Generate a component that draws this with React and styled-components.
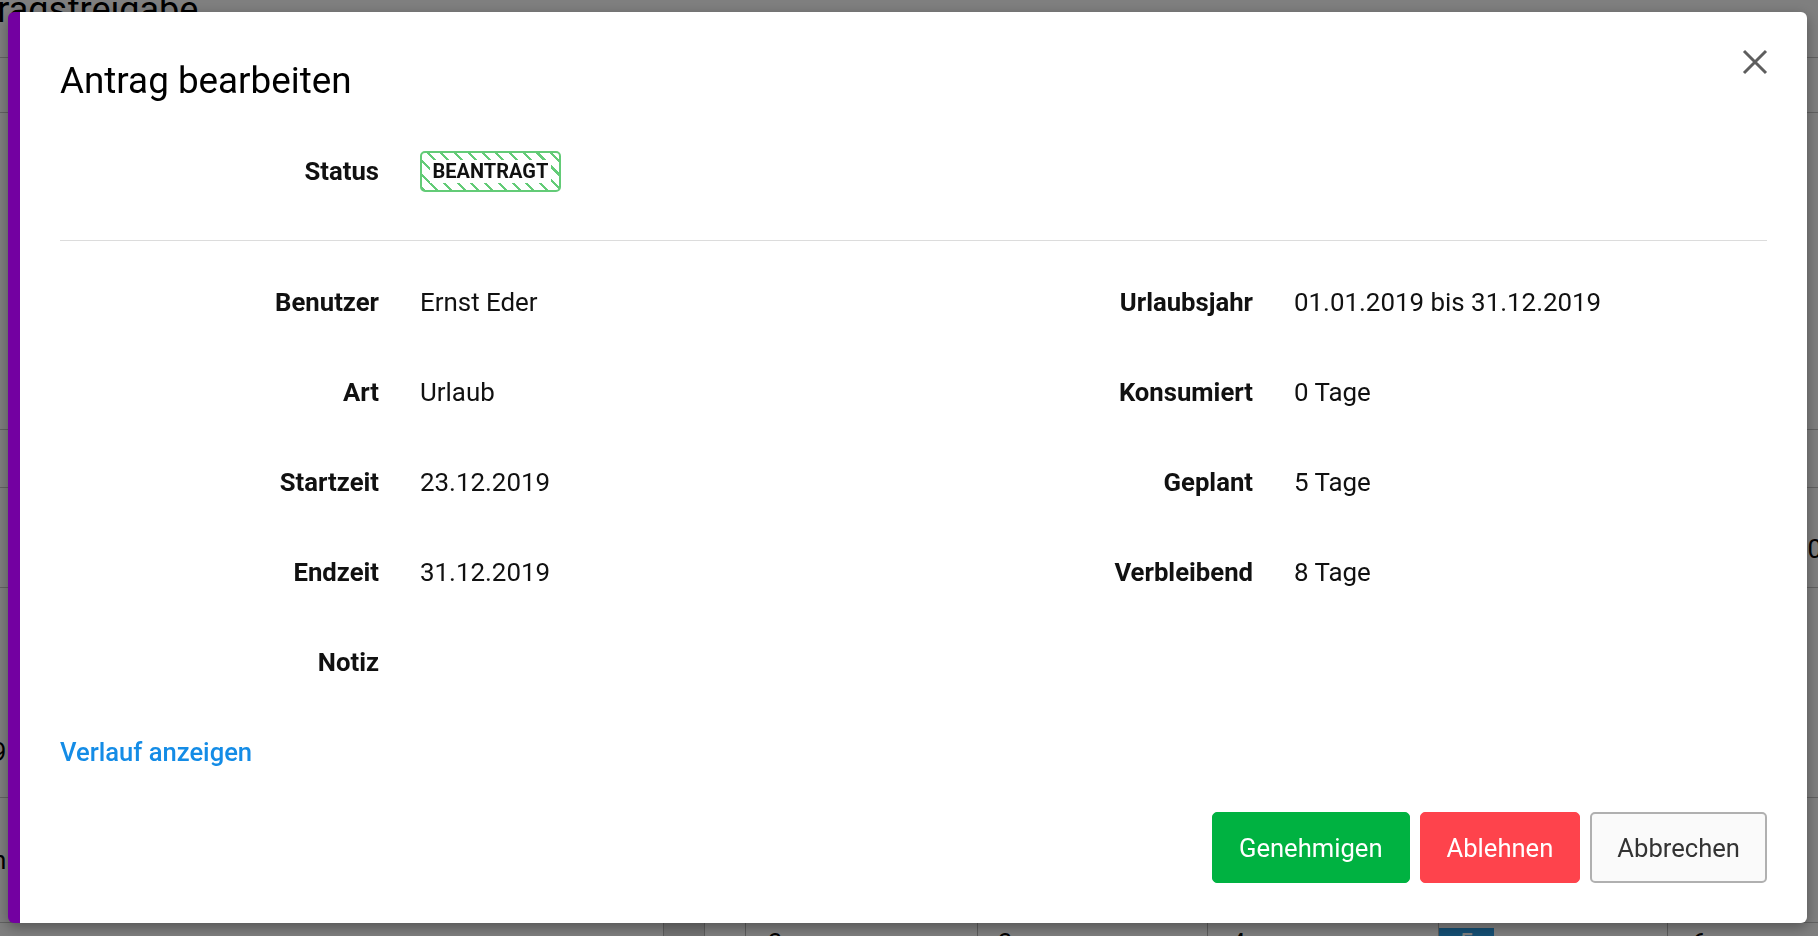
import React from "react";
import styled, { createGlobalStyle } from "styled-components";

const Global = createGlobalStyle`
  html, body { margin: 0; padding: 0; }
  body {
    font-family: Roboto, "Noto Sans", "Liberation Sans", sans-serif;
    background: #fff;
    color: #111;
    overflow: hidden;
  }
  * { box-sizing: border-box; }
`;

/* ---------- background page (under the overlay) ---------- */
const Page = styled.div`
  width: 1818px;
  height: 936px;
  overflow: hidden;
  background: #fff;
  display: flex;
  flex-direction: column;
`;

const PageHeader = styled.header`
  height: 58px;
  flex: none;
  border-bottom: 1px solid #c4c4c4;
`;

const PageTitle = styled.h1`
  margin: -8px 0 0 -58px;
  font-size: 36px;
  line-height: 36px;
  font-weight: 400;
  color: #000;
  white-space: nowrap;
`;

const BgRow = styled.div`
  height: ${(p) => p.$h}px;
  flex: none;
  border-bottom: 1px solid #c4c4c4;
  display: flex;
  justify-content: space-between;
  align-items: ${(p) => p.$align || "center"};
  padding-bottom: ${(p) => p.$pb || 0}px;
  font-size: 26px;
  line-height: 30px;
  color: #000;
`;

const EdgeText = styled.span`
  margin: ${(p) => p.$m};
  white-space: nowrap;
`;

const CalRow = styled.div`
  flex: 1;
  display: flex;
`;

const CalCell = styled.div`
  width: ${(p) => p.$w}px;
  flex: none;
  border-left: ${(p) => (p.$first ? "none" : "1px solid #b8b8b8")};
  background: ${(p) => (p.$shade ? "#e6e6e6" : "#fff")};
  padding: 5px 0 0 ${(p) => p.$pl || 0}px;
  font-size: 26px;
  line-height: 30px;
  color: #000;
`;

const DayNum = styled.span`
  display: inline-block;
  padding: 0 ${(p) => (p.$today ? 20 : 0)}px;
  background: ${(p) => (p.$today ? "#2a9fe8" : "transparent")};
  color: ${(p) => (p.$today ? "#fff" : "#000")};
`;

/* ---------- modal ---------- */
const Overlay = styled.div`
  position: fixed;
  inset: 0;
  background: rgba(0, 0, 0, 0.5);
`;

const Dialog = styled.div`
  position: fixed;
  left: 8px;
  top: 12px;
  width: 1799px;
  height: 911px;
  background: #fff;
  border-left: 12px solid #7300a1;
  border-radius: 6px;
  box-shadow: 0 4px 14px rgba(0, 0, 0, 0.35);
  padding: 46.5px 40px 40px;
  display: flex;
  flex-direction: column;
`;

const DialogHeader = styled.div`
  display: flex;
  justify-content: space-between;
  align-items: flex-start;
`;

const DialogTitle = styled.h2`
  margin: 0;
  font-size: 36.8px;
  line-height: 44px;
  font-weight: 400;
  color: #000;
`;

const CloseButton = styled.button`
  margin: -9.5px -1px 0 0;
  width: 26px;
  height: 26px;
  padding: 0;
  border: 0;
  background: none;
  color: #5e5e5e;
  display: flex;
  cursor: pointer;
`;

const FieldRow = styled.div`
  display: grid;
  grid-template-columns: ${(p) => p.$label}px 1fr;
  column-gap: 41px;
  align-items: center;
  height: ${(p) => p.$h}px;
  margin-top: ${(p) => p.$mt || 0}px;
`;

const Label = styled.div`
  text-align: right;
  font-weight: 700;
  font-size: 25.7px;
  line-height: 38.4px;
  color: #111;
  white-space: nowrap;
`;

const Value = styled.div`
  font-size: 25.9px;
  line-height: 38.4px;
  color: #111;
  white-space: nowrap;
`;

const StatusBadge = styled.span`
  justify-self: start;
  display: inline-flex;
  padding: 7px 7.5px;
  border: 2px solid #63cb77;
  border-radius: 5px;
  background: repeating-linear-gradient(
    45deg,
    #63cb77 0,
    #63cb77 2.2px,
    #fff 2.2px,
    #fff 9.7px
  );
`;

const BadgeText = styled.span`
  padding: 0 3px;
  background: #fff;
  font-size: 20px;
  line-height: 23px;
  font-weight: 700;
  color: #111;
`;

const Divider = styled.hr`
  margin: 48px 0 0;
  border: 0;
  border-top: 1px solid #dcdcdc;
  height: 0;
`;

const DetailGrid = styled.div`
  display: grid;
  grid-template-columns: 1fr 1fr;
  padding-top: 16.3px;
`;

const DetailColumn = styled.div`
  display: flex;
  flex-direction: column;
`;

const HistoryLink = styled.a`
  margin-top: 25.8px;
  align-self: flex-start;
  font-size: 25.6px;
  line-height: 38.4px;
  font-weight: 500;
  color: #148ce6;
  text-decoration: none;
  cursor: pointer;
`;

const Footer = styled.div`
  margin-top: auto;
  display: flex;
  justify-content: flex-end;
  gap: 10px;
`;

const variants = {
  approve: { bg: "#00b241", border: "#00b241", color: "#fff" },
  reject: { bg: "#fe434c", border: "#fe434c", color: "#fff" },
  cancel: { bg: "#fafafa", border: "#b0b0b0", color: "#333" },
};

const Button = styled.button`
  height: 71px;
  padding: 0 ${(p) => (p.$variant === "cancel" ? 25 : 26)}px;
  border: ${(p) => (p.$variant === "cancel" ? 2 : 1)}px solid
    ${(p) => variants[p.$variant].border};
  border-radius: 5px;
  background: ${(p) => variants[p.$variant].bg};
  color: ${(p) => variants[p.$variant].color};
  font-family: inherit;
  font-size: 25.6px;
  font-weight: 400;
  cursor: pointer;
`;

const leftFields = [
  ["Benutzer", "Ernst Eder"],
  ["Art", "Urlaub"],
  ["Startzeit", "23.12.2019"],
  ["Endzeit", "31.12.2019"],
  ["Notiz", ""],
];

const rightFields = [
  ["Urlaubsjahr", "01.01.2019 bis 31.12.2019"],
  ["Konsumiert", "0 Tage"],
  ["Geplant", "5 Tage"],
  ["Verbleibend", "8 Tage"],
];

const calendarCells = [
  { w: 663, first: true },
  { w: 41, shade: true },
  { w: 41 },
  { w: 232, n: "3", pl: 22 },
  { w: 230, n: "3", pl: 20 },
  { w: 231, n: "4", pl: 23 },
  { w: 229, n: "5", today: true },
  { w: 160, n: "6", pl: 24 },
];

function CloseIcon() {
  return (
    <svg width="26" height="26" viewBox="0 0 26 26" fill="none">
      <path
        d="M2 2 L24 24 M24 2 L2 24"
        stroke="currentColor"
        strokeWidth="3"
      />
    </svg>
  );
}

export default function App() {
  return (
    <>
      <Global />
      <Page>
        <PageHeader>
          <PageTitle>Antragsfreigabe</PageTitle>
        </PageHeader>
        <BgRow $h={55} />
        <BgRow $h={317} />
        <BgRow $h={58} />
        <BgRow $h={100} $align="flex-start">
          <span />
          <EdgeText $m="46px -4px 0 0">0</EdgeText>
        </BgRow>
        <BgRow $h={210} $align="flex-end" $pb={30}>
          <EdgeText $m="0 0 0 -52px">2019</EdgeText>
        </BgRow>
        <BgRow $h={125}>
          <EdgeText $m="0 0 0 -8px">n</EdgeText>
        </BgRow>
        <CalRow>
          {calendarCells.map((c, i) => (
            <CalCell key={i} $w={c.w} $first={c.first} $shade={c.shade} $pl={c.pl}>
              {c.n && <DayNum $today={c.today}>{c.n}</DayNum>}
            </CalCell>
          ))}
        </CalRow>
      </Page>

      <Overlay />
      <Dialog role="dialog" aria-label="Antrag bearbeiten">
        <DialogHeader>
          <DialogTitle>Antrag bearbeiten</DialogTitle>
          <CloseButton aria-label="Schließen">
            <CloseIcon />
          </CloseButton>
        </DialogHeader>

        <FieldRow $label={319} $h={41} $mt={48.5}>
          <Label>Status</Label>
          <StatusBadge>
            <BadgeText>BEANTRAGT</BadgeText>
          </StatusBadge>
        </FieldRow>

        <Divider />

        <DetailGrid>
          <DetailColumn>
            {leftFields.map(([l, v]) => (
              <FieldRow key={l} $label={319} $h={90}>
                <Label>{l}</Label>
                <Value>{v}</Value>
              </FieldRow>
            ))}
          </DetailColumn>
          <DetailColumn>
            {rightFields.map(([l, v]) => (
              <FieldRow key={l} $label={339.5} $h={90}>
                <Label>{l}</Label>
                <Value>{v}</Value>
              </FieldRow>
            ))}
          </DetailColumn>
        </DetailGrid>

        <HistoryLink>Verlauf anzeigen</HistoryLink>

        <Footer>
          <Button $variant="approve">Genehmigen</Button>
          <Button $variant="reject">Ablehnen</Button>
          <Button $variant="cancel">Abbrechen</Button>
        </Footer>
      </Dialog>
    </>
  );
}
